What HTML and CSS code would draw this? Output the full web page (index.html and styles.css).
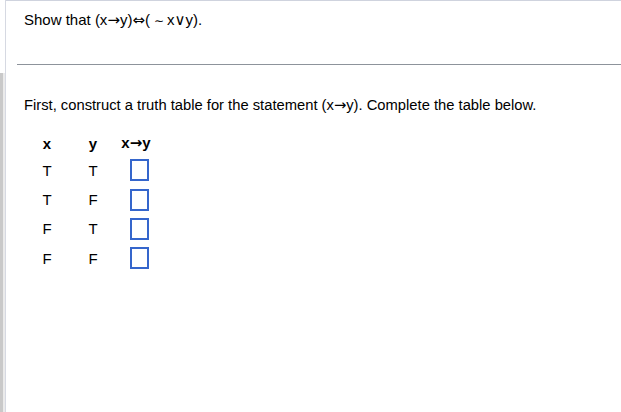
FILE: index.html
```html
<!DOCTYPE html>
<html>
<head>
<meta charset="utf-8">
<link rel="stylesheet" href="styles.css">
</head>
<body>
<div class="frame">
  <div class="gutter">
    <div class="gutter-top"></div>
    <div class="gutter-rest"></div>
  </div>
  <div class="main">
    <div class="question">Show that (x<span class="sym">→</span>y)<span class="sym">⇔</span>(<span class="tilde">∼</span>x∨y).</div>
    <hr class="sep">
    <p class="prompt">First, construct a truth table for the statement (x<span class="sym">→</span>y). Complete the table below.</p>
    <div class="truth">
      <div class="th">x</div>
      <div class="th">y</div>
      <div class="th">x<span class="sym">→</span>y</div>

      <div class="td">T</div>
      <div class="td">T</div>
      <div class="td"><span class="box"></span></div>

      <div class="td">T</div>
      <div class="td">F</div>
      <div class="td"><span class="box"></span></div>

      <div class="td">F</div>
      <div class="td">T</div>
      <div class="td"><span class="box"></span></div>

      <div class="td">F</div>
      <div class="td">F</div>
      <div class="td"><span class="box"></span></div>
    </div>
  </div>
</div>
</body>
</html>
```

FILE: styles.css
```css
html, body {
  margin: 0;
  padding: 0;
  background: #fff;
}

body {
  font-family: "Liberation Sans", Arial, "DejaVu Sans", sans-serif;
  color: #000;
  width: 621px;
  height: 412px;
  overflow: hidden;
}

.frame {
  display: flex;
  height: 412px;
}

.gutter {
  width: 5px;
  border-right: 1px solid #d6d9e2;
  display: flex;
  flex-direction: column;
}

.gutter-top {
  height: 73px;
  background: #fff;
}

.gutter-rest {
  flex: 1;
  background: linear-gradient(to right, #c9c9c9 0, #c9c9c9 3px, #ebebeb 3px, #ebebeb 5px);
}

.main {
  flex: 1;
  border-top: 1px solid #cfd3de;
}

.sym {
  font-family: "DejaVu Sans", sans-serif;
  font-weight: normal;
}

.th .sym {
  font-weight: bold;
}

.tilde {
  font-size: 12px;
  margin: 0 3px 0 4px;
}

.question {
  font-size: 15px;
  line-height: 17px;
  padding: 10px 0 0 18px;
}

.sep {
  margin: 34px 0 0 11px;
  border: 0;
  height: 1px;
  background: #8d939b;
}

.prompt {
  margin: 31px 0 0 18px;
  font-size: 14.75px;
  line-height: 17px;
}

.truth {
  margin: 16px 0 0 21px;
  display: grid;
  grid-template-columns: 40px 52px 34px;
  grid-template-rows: 22px repeat(4, 22px);
  row-gap: 7.33px;
  justify-items: center;
  font-size: 15px;
  line-height: 17px;
}

.th {
  font-weight: bold;
  align-self: end;
}

.td {
  align-self: center;
}

.box {
  display: block;
  width: 15px;
  height: 18px;
  margin-left: 7px;
  border: 2px solid #3566cc;
  background: #fff;
}
```
